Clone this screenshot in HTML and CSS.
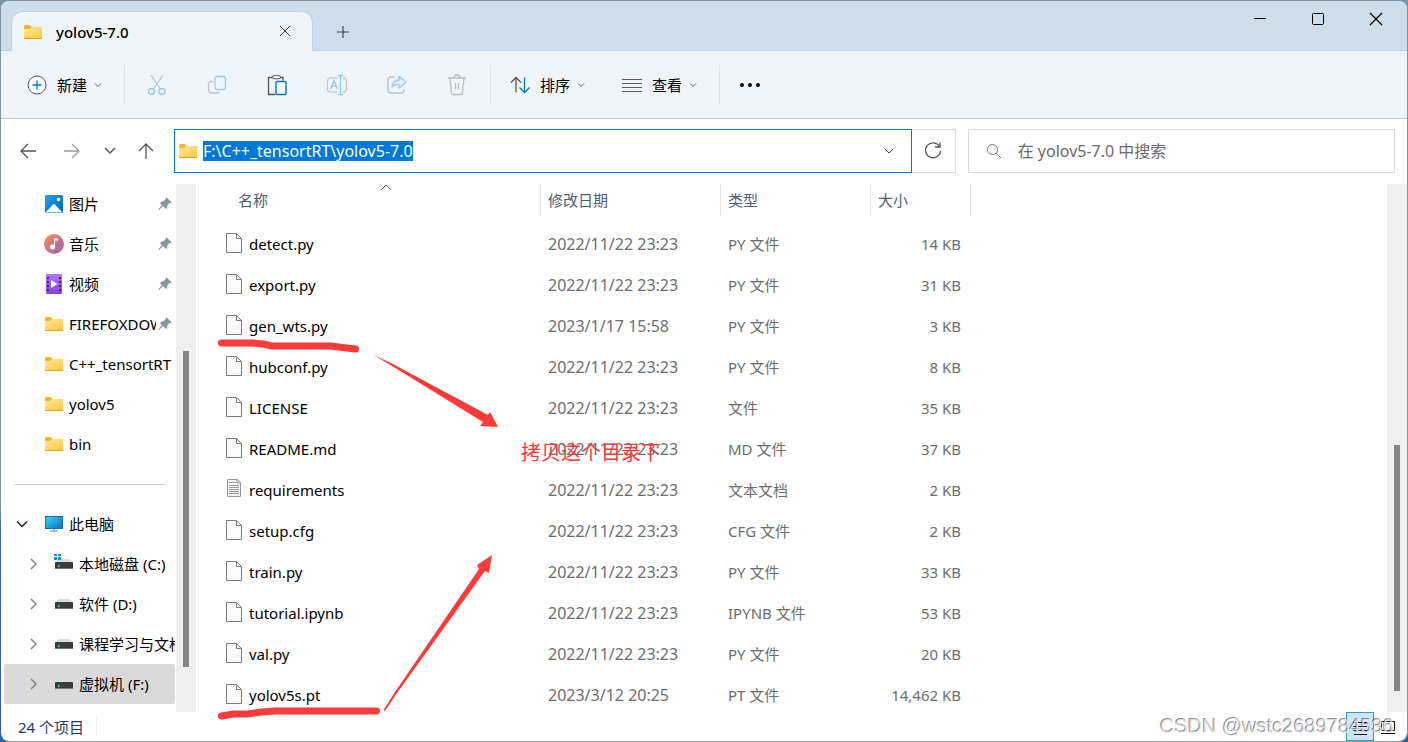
FILE: index.html
```html
<!DOCTYPE html>
<html lang="zh-CN">
<head>
<meta charset="utf-8">
<title>yolov5-7.0</title>
<link rel="stylesheet" href="styles.css">
</head>
<body>
<svg class="symbols" aria-hidden="true">
  <defs>
    <linearGradient id="g-folder" x1="0" y1="0" x2="1" y2="1"><stop offset="0" stop-color="#ffe9a0"/><stop offset="1" stop-color="#ffc637"/></linearGradient>
    <linearGradient id="g-pic" x1="0" y1="0" x2="1" y2="1"><stop offset="0" stop-color="#1fa2e8"/><stop offset="1" stop-color="#0568b8"/></linearGradient>
    <linearGradient id="g-music" x1="0" y1="0" x2="1" y2="1"><stop offset="0.1" stop-color="#f08a5a"/><stop offset="1" stop-color="#9a5cb8"/></linearGradient>
    <linearGradient id="g-video" x1="0" y1="0" x2="0" y2="1"><stop offset="0" stop-color="#b474f5"/><stop offset="1" stop-color="#8544dd"/></linearGradient>
    <linearGradient id="g-pc" x1="0" y1="0" x2="1" y2="1"><stop offset="0" stop-color="#35d6e8"/><stop offset="1" stop-color="#0f6fc4"/></linearGradient>
  </defs>
  <symbol id="folder" viewBox="0 0 20 20"><path d="M1 7h6l2-2h9.500q.5 0 .5.5V16q0 1-1 1H2q-1 0-1-1z" fill="url(#g-folder)"/><path d="M1 4.500q0-1.500 1.500-1.500h4l2 2-2 2H1z" fill="#f9b31c"/><path d="M1 16.500h18" stroke="#e8a21c"/></symbol>
  <symbol id="picture" viewBox="0 0 20 20"><rect x="1" y="1" width="18" height="18" rx="1.500" fill="url(#g-pic)"/><path d="M1.500 18.500 9 10.500q1-1 2 0l7.500 8z" fill="#f4faff"/><circle cx="14.500" cy="5.500" r="1.700" fill="#fff"/></symbol>
  <symbol id="music" viewBox="0 0 20 20"><circle cx="10" cy="10" r="10" fill="url(#g-music)"/><circle cx="8.500" cy="13" r="2.500" fill="#fff"/><path d="M10 13V4.500h4v2h-3V13z" fill="#fff"/></symbol>
  <symbol id="video" viewBox="0 0 20 20"><rect x="2" width="16" height="20" rx="1" fill="url(#g-video)"/><path d="M4 3v15M16 3v15" stroke="#4a2285" stroke-width="2" stroke-dasharray="2 2"/><path d="M7 6v8l6.500-4z" fill="#fff"/></symbol>
  <symbol id="pc" viewBox="0 0 20 20"><path d="M9 14h2v3H9z" fill="#aab4bd"/><path d="M6 17h8" stroke="#7c8790"/><rect x="1" y="2" width="18" height="13" fill="#126cb6"/><rect x="2" y="3" width="16" height="11" fill="url(#g-pc)"/></symbol>
  <symbol id="drive" viewBox="0 0 20 20"><path d="M4.500 5h11l3.500 3.500H1z" fill="#dcdcde"/><rect x="1" y="8" width="18" height="7" rx=".5" fill="#3b3c3e"/><path d="M1 14.500h18" stroke="#777"/><path d="M4 11h1.500v2H4z" fill="#53e05a"/></symbol>
  <symbol id="drive-c" viewBox="0 0 20 20"><path d="M4.500 5h11l3.500 3.500H1z" fill="#dcdcde"/><rect x="1" y="8" width="18" height="7" rx=".5" fill="#3b3c3e"/><path d="M1 14.500h18" stroke="#777"/><path d="M4 11h1.500v2H4z" fill="#53e05a"/><path d="M0-1h3v3H0zm4 0h3v3H4zM0 3h3v3H0zm4 0h3v3H4z" fill="#118bdc"/></symbol>
  <symbol id="pin" viewBox="0 0 14 14"><path d="M8.500.5 13.500 5q-.5 1.500-2.500 1.300L9.300 8.500Q9.600 11 8 12L5 9 1 13l-.7-.7L4 8 2 6q.8-1.800 3.200-1.400L7.500 2.500Q7.200 1 8.500.5z" fill="#8b979f"/></symbol>
  <symbol id="file" viewBox="0 0 18 22"><path d="M1.500 1.500h10l5 5v14h-15z" fill="#fafafa" stroke="#7b7b7b"/><path d="M11.500 1.500v5h5" fill="none" stroke="#7b7b7b"/></symbol>
  <symbol id="textfile" viewBox="0 0 18 22"><path d="M2.500 1.500h10l3 3v14h-13z" fill="#f5f5f5" stroke="#999" /><path d="M12 1.500V5h3.500" fill="none" stroke="#888"/><path d="M4 4.500h7M4 7.500h10M4 9.500h10M4 11.500h10M4 13.500h10M4 15.500h10" stroke="#999"/></symbol>
  <symbol id="down" viewBox="0 0 10 10"><path d="M2 3.500l3 3 3-3" fill="none" stroke="currentColor"/></symbol>
  <symbol id="right" viewBox="0 0 12 12"><path d="M4 1l5 5-5 5" fill="none" stroke="#858585" stroke-width="1.500"/></symbol>
</svg>

<div class="window">
  <header class="titlebar">
    <div class="tab">
      <svg class="icon"><use href="#folder"/></svg>
      <span class="tab-title">yolov5-7.0</span>
      <button class="tab-close" aria-label="关闭标签页"><svg width="14" height="14"><path d="M2 1l10 10M12 1L2 11" stroke="#333" fill="none"/></svg></button>
    </div>
    <button class="tab-new" aria-label="新标签页"><svg width="14" height="14"><path d="M7 2v12M1 8h12" stroke="#444" stroke-width="1.200"/></svg></button>
    <div class="caption">
      <button aria-label="最小化"><svg width="14" height="14"><path d="M1 6.500h12" stroke="#000"/></svg></button>
      <button aria-label="最大化"><svg width="14" height="14"><rect x="1.500" y="1.500" width="11" height="11" rx="1" fill="none" stroke="#000"/></svg></button>
      <button aria-label="关闭"><svg width="14" height="14"><path d="M1 1l12 12M13 1L1 13" stroke="#000" stroke-width="1.200"/></svg></button>
    </div>
  </header>

  <div class="toolbar">
    <button class="cmd"><svg class="icon" viewBox="0 0 20 20"><circle cx="10" cy="10" r="9" fill="#f8fafc" stroke="#555"/><path d="M10 5.500v9M5.500 10h9" stroke="#0078d4" stroke-width="1.300"/></svg><span>新建</span><svg class="chev"><use href="#down"/></svg></button>
    <i class="rule"></i>
    <div class="tools">
      <button aria-label="剪切"><svg class="icon" viewBox="0 0 20 20" fill="none"><path d="M4 0l9.500 14M16 0L6.500 14" stroke="#b9c0c6" stroke-width="1.200"/><circle cx="4.500" cy="16.500" r="3" stroke="#92c5ef" stroke-width="1.300"/><circle cx="15" cy="16.500" r="3" stroke="#92c5ef" stroke-width="1.300"/></svg></button>
      <button aria-label="复制"><svg class="icon" viewBox="0 0 20 20" fill="none"><path d="M6 6.500H4.500A3 3 0 0 0 1.500 9.500V15a3 3 0 0 0 3 3h5q2 0 2.500-1.500" stroke="#bcc3c9" stroke-width="1.300"/><rect x="8" y="1.500" width="10.500" height="13" rx="2.500" stroke="#9bcbf2" stroke-width="1.300"/></svg></button>
      <button aria-label="粘贴"><svg class="icon" viewBox="0 0 20 20" fill="none"><path d="M6 2.500H1.500v17H8M13 2.500h3v3" stroke="#555" stroke-width="1.300"/><rect x="5.500" y=".7" width="8" height="3" rx="1.500" stroke="#555" fill="#fff"/><rect x="9" y="6.500" width="10" height="13" rx="1" stroke="#0078d4" stroke-width="1.400" fill="#f5faff"/></svg></button>
      <button aria-label="重命名"><svg class="icon" viewBox="0 0 20 20" fill="none"><path d="M11 3H3.500A3 3 0 0 0 .5 6v8a3 3 0 0 0 3 3H11M16 3a3 3 0 0 1 3.500 3v8A3 3 0 0 1 16 17" stroke="#bcc3c9" stroke-width="1.200"/><path d="M3.500 14L7 5.500l3.500 8.500M5 11h4M13.500.5v19M11 .5h5M11 19.500h5" stroke="#92c5ef" stroke-width="1.300"/></svg></button>
      <button aria-label="共享"><svg class="icon" viewBox="0 0 20 20" fill="none"><path d="M7.500 2H4a3 3 0 0 0-3 3v10a3 3 0 0 0 3 3h10a3 3 0 0 0 3-2.500V14" stroke="#bcc3c9" stroke-width="1.400"/><path d="M12 1.500L19 7l-7 6v-3.500q-5-.5-7 3 .3-7 7-7.500z" stroke="#9bcbf2" stroke-width="1.300" fill="#e0effb"/></svg></button>
      <button aria-label="删除"><svg class="icon" viewBox="0 0 20 20" fill="none" stroke="#b9bec3" stroke-width="1.300"><path d="M1 3h18M7 3q0-3 3-3t3 3M3 3l1.500 14.500q.2 2 2 2h7q1.800 0 2-2L17 3M8.500 8v6M11.500 8v6"/></svg></button>
    </div>
    <i class="rule"></i>
    <button class="cmd sort"><svg class="icon" viewBox="0 0 20 20" fill="none" stroke-width="1.300"><path d="M6 17.500V2.500M1 7.500l5-5 5 5" stroke="#555"/><path d="M14.500 2.500v15M9.500 12.500l5 5 5-5" stroke="#0078d4"/></svg><span>排序</span><svg class="chev"><use href="#down"/></svg></button>
    <button class="cmd view"><svg class="icon" viewBox="0 0 20 20"><path d="M0 4.500h20M0 8.500h20M0 12.500h20M0 16.500h20" stroke="#5c5c5c"/></svg><span>查看</span><svg class="chev"><use href="#down"/></svg></button>
    <i class="rule"></i>
    <button class="more" aria-label="更多"><svg class="icon" viewBox="0 0 20 20"><circle cx="2" cy="10" r="2"/><circle cx="10" cy="10" r="2"/><circle cx="18" cy="10" r="2"/></svg></button>
  </div>

  <nav class="navbar">
    <button class="nav" aria-label="后退"><svg class="icon" viewBox="0 0 20 20" fill="none" stroke="#555" stroke-width="1.300"><path d="M18 10H3M10 3l-7 7 7 7"/></svg></button>
    <button class="nav" aria-label="前进"><svg class="icon" viewBox="0 0 20 20" fill="none" stroke="#999" stroke-width="1.300"><path d="M2 10h15M10 3l7 7-7 7"/></svg></button>
    <button class="nav narrow" aria-label="最近"><svg width="12" height="12" fill="none" stroke="#555" stroke-width="1.500"><path d="M1 3l5 5 5-5"/></svg></button>
    <button class="nav up" aria-label="向上"><svg class="icon" viewBox="0 0 20 20" fill="none" stroke="#555" stroke-width="1.300"><path d="M10 18V3M3 10l7-7 7 7"/></svg></button>
    <div class="address">
      <svg class="icon"><use href="#folder"/></svg>
      <input id="path" type="text" aria-label="地址" value="F:\C++_tensortRT\yolov5-7.0" spellcheck="false">
      <button class="drop" aria-label="展开"><svg width="12" height="12" fill="none" stroke="#444"><path d="M2 4l4 4 4-4"/></svg></button>
    </div>
    <button class="refresh" aria-label="刷新"><svg class="icon" viewBox="0 0 20 20" fill="none" stroke="#555" stroke-width="1.300"><path d="M16.500 5.500A7.500 7.500 0 1 0 17.500 10M17 1.500V6h-5"/></svg></button>
    <label class="search">
      <svg width="16" height="16" fill="none" stroke="#777"><circle cx="6.500" cy="6.500" r="5"/><path d="M10 10l5 5"/></svg>
      <input type="text" aria-label="搜索" placeholder="在 yolov5-7.0 中搜索">
    </label>
  </nav>

  <main class="content">
    <aside class="sidebar">
      <ul class="tree">
        <li class="item quick"><svg class="icon"><use href="#picture"/></svg><span>图片</span><svg class="pin"><use href="#pin"/></svg></li>
        <li class="item quick"><svg class="icon"><use href="#music"/></svg><span>音乐</span><svg class="pin"><use href="#pin"/></svg></li>
        <li class="item quick"><svg class="icon"><use href="#video"/></svg><span>视频</span><svg class="pin"><use href="#pin"/></svg></li>
        <li class="item quick"><svg class="icon"><use href="#folder"/></svg><span>FIREFOXDOWNLOAD</span><svg class="pin"><use href="#pin"/></svg></li>
        <li class="item quick"><svg class="icon"><use href="#folder"/></svg><span>C++_tensortRT</span></li>
        <li class="item quick"><svg class="icon"><use href="#folder"/></svg><span>yolov5</span></li>
        <li class="item quick"><svg class="icon"><use href="#folder"/></svg><span>bin</span></li>
        <li class="split"></li>
        <li class="item root"><svg class="twist" viewBox="0 0 12 12"><path d="M1 3.500l5 5 5-5" fill="none" stroke="#222" stroke-width="1.500"/></svg><svg class="icon"><use href="#pc"/></svg><span>此电脑</span></li>
        <li class="item disk"><svg class="twist"><use href="#right"/></svg><svg class="icon"><use href="#drive-c"/></svg><span>本地磁盘 (C:)</span></li>
        <li class="item disk"><svg class="twist"><use href="#right"/></svg><svg class="icon"><use href="#drive"/></svg><span>软件 (D:)</span></li>
        <li class="item disk"><svg class="twist"><use href="#right"/></svg><svg class="icon"><use href="#drive"/></svg><span>课程学习与文档 (E:)</span></li>
        <li class="item disk selected"><svg class="twist"><use href="#right"/></svg><svg class="icon"><use href="#drive"/></svg><span>虚拟机 (F:)</span></li>
      </ul>
      <div class="scroll side"><i></i></div>
    </aside>

    <section class="files">
      <table>
        <colgroup><col class="c-name"><col class="c-date"><col class="c-type"><col class="c-size"></colgroup>
        <thead><tr><th>名称<svg class="sorted" width="10" height="6"><path d="M0 5l5-5 5 5" fill="none" stroke="#555"/></svg></th><th>修改日期</th><th>类型</th><th>大小</th></tr></thead>
        <tbody>
          <tr><td><svg><use href="#file"/></svg>detect.py</td><td>2022/11/22 23:23</td><td>PY 文件</td><td>14 KB</td></tr>
          <tr><td><svg><use href="#file"/></svg>export.py</td><td>2022/11/22 23:23</td><td>PY 文件</td><td>31 KB</td></tr>
          <tr><td><svg><use href="#file"/></svg>gen_wts.py</td><td>2023/1/17 15:58</td><td>PY 文件</td><td>3 KB</td></tr>
          <tr><td><svg><use href="#file"/></svg>hubconf.py</td><td>2022/11/22 23:23</td><td>PY 文件</td><td>8 KB</td></tr>
          <tr><td><svg><use href="#file"/></svg>LICENSE</td><td>2022/11/22 23:23</td><td>文件</td><td>35 KB</td></tr>
          <tr><td><svg><use href="#file"/></svg>README.md</td><td>2022/11/22 23:23</td><td>MD 文件</td><td>37 KB</td></tr>
          <tr><td><svg><use href="#textfile"/></svg>requirements</td><td>2022/11/22 23:23</td><td>文本文档</td><td>2 KB</td></tr>
          <tr><td><svg><use href="#file"/></svg>setup.cfg</td><td>2022/11/22 23:23</td><td>CFG 文件</td><td>2 KB</td></tr>
          <tr><td><svg><use href="#file"/></svg>train.py</td><td>2022/11/22 23:23</td><td>PY 文件</td><td>33 KB</td></tr>
          <tr><td><svg><use href="#file"/></svg>tutorial.ipynb</td><td>2022/11/22 23:23</td><td>IPYNB 文件</td><td>53 KB</td></tr>
          <tr><td><svg><use href="#file"/></svg>val.py</td><td>2022/11/22 23:23</td><td>PY 文件</td><td>20 KB</td></tr>
          <tr><td><svg><use href="#file"/></svg>yolov5s.pt</td><td>2023/3/12 20:25</td><td>PT 文件</td><td>14,462 KB</td></tr>
        </tbody>
      </table>
    </section>
    <div class="scroll main"><i></i></div>
  </main>

  <footer class="status">
    <span class="count">24 个项目</span>
    <button class="on" aria-label="详细信息"><svg width="20" height="20" stroke="#111"><path d="M3 5.500h4M8 5.500h9M3 9.500h4M8 9.500h9M3 13.500h4M8 13.500h9M4 17.500h13"/></svg></button>
    <button aria-label="大图标"><svg width="20" height="20" stroke="#111" fill="none"><path d="M3.500 4.500h13v9h-13zM3 16.500h14"/></svg></button>
  </footer>
</div>

<svg class="marks" width="520" height="742" aria-hidden="true">
  <g fill="none" stroke="#fb3a3a" stroke-width="7" stroke-linecap="round" stroke-linejoin="round">
    <path d="M221.500 343h30l12 1 8 2h59l8 1 8 1 9 1"/>
    <path d="M221.500 716l12-2h14l14-2 14-1h101"/>
  </g>
  <path d="M373.500 355L392 363.500 488 415l2-3 8 15-18-1 3-4L392 366z" fill="#fb3a3a"/>
  <path d="M383.500 710L395 692 479 569l-2-4 15-10-3 18-4-2L396 694.500 385 711z" fill="#fb3a3a"/>
</svg>
<div class="note">拷贝这个目录下</div>
<div class="watermark">CSDN @wstc2689784536</div>
<script src="main.js"></script>
</body>
</html>
```
FILE: styles.css
```css
* { box-sizing: border-box; }
body {
  margin: 0;
  height: 100vh;
  overflow: hidden;
  position: relative;
  background: linear-gradient(#7e93a5 0 68%, #2f69b2 72%, #2563ab);
  font: 15px/20px "Noto Sans", "Noto Sans CJK SC", sans-serif;
  color: #000;
}
button { border: 0; padding: 0; background: none; font: inherit; color: inherit; display: flex; align-items: center; justify-content: center; }
input { border: 0; padding: 0; outline: 0; background: none; font: inherit; min-width: 0; flex: 1; }
svg { display: block; flex: none; overflow: visible; }
.symbols { position: absolute; width: 0; height: 0; }
.icon { width: 20px; height: 20px; }

.window {
  height: 100vh;
  display: flex;
  flex-direction: column;
  border: 1px solid #7f93a5;
  border-bottom-color: #999;
  border-left-color: transparent;
  border-radius: 9px;
  background: #fff padding-box;
  overflow: hidden;
}

.titlebar { height: 50px; flex: none; display: flex; align-items: flex-end; background: #ccdeeb; border-bottom: 1px solid #bed2e1; }
.tab {
  width: 300px; height: 39px; margin: 0 0 -1px 11px; padding: 0 20px 0 11px;
  display: flex; align-items: center; gap: 13px;
  background: #eff4f9; border-radius: 10px 10px 0 0; box-shadow: 0 0 0 1px #bed2e1; clip-path: inset(-2px -2px 0 -2px);
}
.tab-title { flex: 1; font-weight: 500; }
.tab-new { width: 40px; height: 38px; margin-left: 11px; }
.caption { margin-left: auto; margin-right: 2px; display: flex; align-self: flex-start; }
.caption button { width: 58px; height: 36px; }

.toolbar { height: 68px; flex: none; display: flex; align-items: center; background: #eff4f9; border-bottom: 1px solid #bccddd; padding-left: 26px; }
.cmd { gap: 10px; height: 40px; width: 76px; }
.cmd .chev { margin-left: -4px; }
.chev { width: 10px; height: 10px; color: #666; }
.rule { width: 1px; height: 40px; background: #dde2e7; margin-left: 21px; }
.tools { display: flex; margin: 0 -18px 0 2px; }
.tools button { width: 60px; height: 40px; }
.sort { margin-left: 19px; }
.view { margin-left: 36px; }
.more { margin-left: 20px; }

.navbar { flex: none; display: flex; align-items: center; padding: 10px 12px 11px 5px; }
.nav { width: 44px; height: 44px; }
.narrow { width: 32px; }
.up { width: 40px; }
.address { flex: 732 1 0; min-width: 0; height: 44px; margin-left: 8px; display: flex; align-items: center; gap: 5px; padding-left: 3px; border: 1px solid #0078d4; }
#path { font-size: 16px; }
#path::selection { background: #0078d7; color: #fff; }
.drop { width: 44px; height: 42px; }
.refresh { width: 44px; height: 44px; border: 1px solid #d9d9d9; border-left: 0; }
.search { flex: 408 1 0; min-width: 0; height: 44px; margin-left: 12px; padding-left: 17px; display: flex; align-items: center; gap: 16px; border: 1px solid #d9d9d9; }
.search input { font-size: 16px; }
.search input::placeholder { color: #6a6a6a; opacity: 1; }

.content { flex: 1; min-height: 0; display: flex; }
.sidebar { display: flex; width: 198px; flex: none; border-right: 1px solid #f2f2f2; }
.tree { list-style: none; margin: 0; padding: 0 1px 0 3px; flex: 1; min-width: 0; overflow: hidden; }
.item { display: flex; align-items: center; height: 40px; gap: 5px; border-radius: 2px; white-space: nowrap; overflow: hidden; }
.item span { overflow: hidden; flex: 1; }
.quick { padding-left: 40px; }
.root { padding-left: 12px; }
.root .icon { margin-left: 11px; }
.disk { padding-left: 23px; }
.disk .icon { margin-left: 10px; }
.twist { width: 12px; height: 12px; }
.pin { width: 14px; height: 14px; margin: 0 3px 0 -3px; }
.split { height: 40px; display: flex; align-items: center; padding: 0 10px; }
.split::before { content: ""; flex: 1; height: 1px; background: #ccc; }
.selected { background: #d9d9d9; }

.scroll { width: 20px; flex: none; background: #efefef; padding-left: 7px; }
.scroll i { display: block; width: 6px; background: #858585; }
.side { margin-right: 2px; }
.side i { margin-top: 167px; height: 316px; }
.main i { margin-top: 261px; height: 246px; }

.files { flex: 1; min-width: 0; overflow: hidden; }
table { table-layout: fixed; width: 772px; border-spacing: 0; color: #6d6d6d; }
.c-name { width: 342px; }
.c-date { width: 180px; }
.c-type { width: 150px; }
.c-size { width: 100px; }
th { position: relative; height: 32px; padding: 0 0 0 7px; text-align: left; font-weight: 400; color: #4c607a; border-right: 1px solid #e5e5e5; }
th:first-child { padding-left: 39px; }
.sorted { position: absolute; left: 182px; top: 1px; }
tbody::before { content: ""; display: block; height: 7px; }
td { height: 41px; padding: 0 0 0 7px; white-space: nowrap; }
td:first-child { display: flex; align-items: center; gap: 6px; padding-left: 26px; color: #000; }
td:first-child svg { width: 18px; height: 22px; margin-bottom: 2px; }
td:nth-child(2) { font-size: 16px; }
td:last-child { text-align: right; padding-right: 10px; }

.status { height: 29px; flex: none; display: flex; align-items: center; padding-left: 17px; color: #1f3a5f; }
.count { margin-right: auto; padding-right: 12px; border-right: 1px solid #eee; }
.status button { width: 28px; height: 29px; }
.status button:last-child { width: 33px; padding-right: 5px; }
.status .on { background: #cce8f6; border: 1px solid #26a0da; }

.marks { position: absolute; left: 0; top: 0; pointer-events: none; }
.note { position: absolute; left: 521px; top: 440px; font-size: 20px; line-height: 26px; color: #fb3a3a; }
.watermark { position: absolute; right: 14px; bottom: 4px; font: 20px/24px "Liberation Sans", sans-serif; color: rgba(235, 235, 235, 0.8); text-shadow: -1px -1px 0 rgba(90, 90, 90, 0.7); }
```
FILE: main.js
```js
const path = document.getElementById('path');
path.focus();
path.select();
```
